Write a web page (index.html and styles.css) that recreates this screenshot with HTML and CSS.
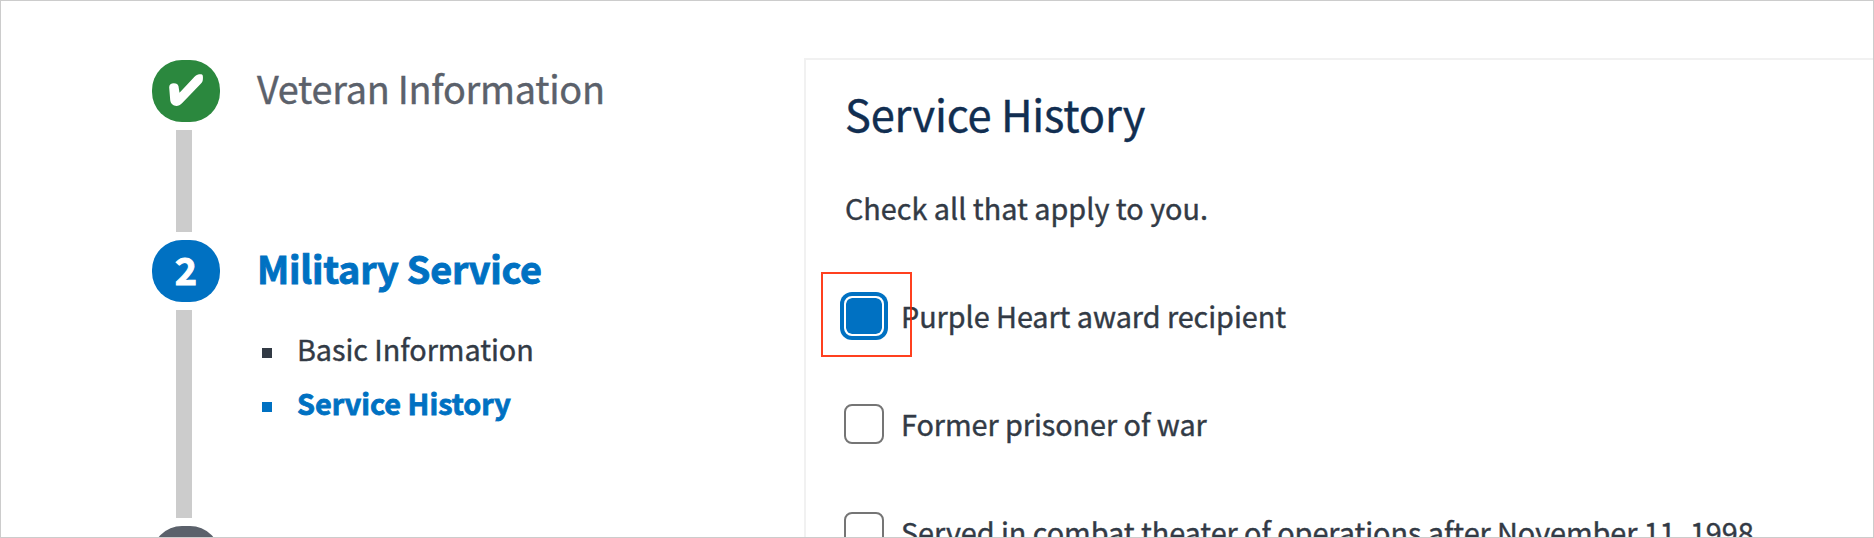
FILE: index.html
```html
<!DOCTYPE html>
<html lang="en">
<head>
<meta charset="utf-8">
<title>Service History</title>
<link rel="stylesheet" href="styles.css">
</head>
<body>
<div class="page">
  <nav class="steps">
    <section class="step step-done">
      <div class="rail">
        <div class="badge"><svg class="check" viewBox="0 0 34 32"><path d="M.2 13.500C0 11 2 9.200 4.800 9.200C7.600 9.200 9 10.200 9.500 12.200L10.500 18.800L25.500 2.800C28 .2 31 0 33 .4C34.200 .8 34 4 33.800 6C33.600 7.500 33 8.500 32 9.600L13.500 28.800C11.200 31.200 9.300 31.900 7.500 31.900C4.200 31.900 1.600 29.800 1.200 26Z"/></svg></div>
        <div class="line"></div>
      </div>
      <div class="step-body"><h2 class="step-title">Veteran Information</h2></div>
    </section>
    <section class="step step-current">
      <div class="rail">
        <div class="badge"><span class="num">2</span></div>
        <div class="line"></div>
      </div>
      <div class="step-body">
        <h2 class="step-title">Military Service</h2>
        <ul class="substeps">
          <li class="substep"><span>Basic Information</span></li>
          <li class="substep active"><span>Service History</span></li>
        </ul>
      </div>
    </section>
    <section class="step step-next">
      <div class="rail"><div class="badge"></div></div>
    </section>
  </nav>
  <main class="card">
    <h1 class="title">Service History</h1>
    <p class="intro">Check all that apply to you.</p>
    <div class="options">
      <label class="option"><span class="box focused"><span class="highlight"></span></span><span>Purple Heart award recipient</span></label>
      <label class="option"><span class="box"></span><span>Former prisoner of war</span></label>
      <label class="option"><span class="box"></span><span>Served in combat theater of operations after November 11, 1998</span></label>
    </div>
  </main>
</div>
</body>
</html>
```
FILE: styles.css
```css
* { box-sizing: border-box; }
body { margin: 0; background: #fff; }
.page {
  display: flex;
  width: 1874px;
  height: 538px;
  overflow: hidden;
  border: 1px solid #ccc;
  font-family: "Noto Sans CJK SC", "Noto Sans", sans-serif;
  font-size: 28.8px;
  line-height: 40px;
  letter-spacing: -.05px;
  color: #323a45;
  white-space: nowrap;
  -webkit-text-stroke: .4px currentColor;
}
h1, h2, p, ul { margin: 0; padding: 0; font-weight: 400; }
.steps { width: 803px; flex: none; padding: 59px 0 0 151px; }
.step { display: flex; gap: 37px; height: 180px; }
.step-current { height: 286px; }
.rail { display: flex; flex-direction: column; width: 68px; flex: none; gap: 8px; }
.badge {
  display: flex;
  align-items: center;
  justify-content: center;
  flex: none;
  height: 62px;
  border-radius: 30px;
  background: #5b616b;
  color: #fff;
}
.step-done .badge { background: #2b883e; }
.step-current .badge { background: #0071c2; }
.check { width: 34px; height: 32px; fill: #fff; margin-top: -3px; }
.num { font-size: 37.8px; font-weight: 700; line-height: 56px; margin-top: -5px; -webkit-text-stroke: 1px #fff; }
.line { flex: 1; width: 16px; margin: 0 0 8px 24px; background: #ccc; }
.step-title { padding-top: 1px; font-size: 37.8px; line-height: 54px; letter-spacing: -.25px; color: #5b616b; }
.step-current .step-title { color: #0071c2; font-weight: 700; letter-spacing: -.22px; -webkit-text-stroke: .9px #0071c2; }
.substeps { list-style: none; padding-top: 27px; }
.substep { display: flex; align-items: center; gap: 25px; height: 54px; padding-left: 5px; }
.substep::before { content: ""; width: 10px; height: 10px; margin-top: 8px; background: currentColor; }
.active { color: #0071c2; font-weight: 700; letter-spacing: 0; -webkit-text-stroke: .8px #0071c2; }
.card {
  flex: none;
  width: 1200px;
  height: 700px;
  margin-top: 57px;
  padding: 29px 0 0 38px;
  border: 2px solid #f1f1f1;
}
.title { padding-left: 1px; font-size: 43.4px; line-height: 48px; letter-spacing: -.18px; color: #112e51; }
.intro { padding: 51px 0 0 1px; letter-spacing: 0; }
.options { display: grid; gap: 68px; padding: 68px 0 0; }
.option { display: flex; gap: 17px; height: 40px; }
.box { position: relative; width: 40px; height: 40px; border: 2px solid #757575; border-radius: 8px; flex: none; }
.focused { border-color: #fff; background: #0071c2; background-clip: padding-box; box-shadow: 0 0 0 4px #0071c2; }
.highlight { position: absolute; left: -25px; top: -26px; width: 91px; height: 85px; border: 2px solid #ff2600; opacity: .88; }
```
